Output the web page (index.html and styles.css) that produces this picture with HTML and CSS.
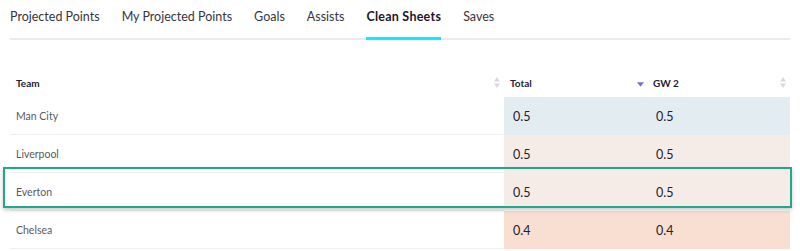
FILE: index.html
```html
<!DOCTYPE html>
<html lang="en">
<head>
<meta charset="utf-8">
<title>Clean Sheets</title>
<link rel="stylesheet" href="styles.css">
</head>
<body>
<nav class="tabs">
  <span class="tab">Projected Points</span>
  <span class="tab">My Projected Points</span>
  <span class="tab">Goals</span>
  <span class="tab">Assists</span>
  <span class="tab active">Clean Sheets</span>
  <span class="tab">Saves</span>
</nav>

<div class="table">
  <div class="row head">
    <div class="th">Team
      <svg class="sort" viewBox="0 0 6 11" width="6" height="11"><path d="M3 0 L6 4.5 H0 Z M3 11 L6 6.5 H0 Z"/></svg>
    </div>
    <div class="th">Total
      <svg class="sort active" viewBox="0 0 6 4" width="7" height="5"><path d="M0 0 H6 L3 4 Z"/></svg>
    </div>
    <div class="th">GW 2
      <svg class="sort" viewBox="0 0 6 11" width="6" height="11"><path d="M3 0 L6 4.5 H0 Z M3 11 L6 6.5 H0 Z"/></svg>
    </div>
  </div>

  <div class="row">
    <div class="td team">Man City</div>
    <div class="td num blue">0.5</div>
    <div class="td num blue">0.5</div>
  </div>
  <div class="row">
    <div class="td team">Liverpool</div>
    <div class="td num peach">0.5</div>
    <div class="td num peach">0.5</div>
  </div>
  <div class="row selected">
    <div class="td team">Everton</div>
    <div class="td num peach">0.5</div>
    <div class="td num peach">0.5</div>
  </div>
  <div class="row">
    <div class="td team">Chelsea</div>
    <div class="td num orange">0.4</div>
    <div class="td num orange">0.4</div>
  </div>
</div>
</body>
</html>
```

FILE: styles.css
```css
* { box-sizing: border-box; }

body {
  margin: 0;
  background: #fff;
  font-family: Lato, "Noto Sans", sans-serif;
  color: #2b2533;
}

.tabs {
  display: flex;
  gap: 22px;
  margin: 0 10px;
  box-shadow: inset 0 -2px 0 #ebebeb;
}

.tab {
  font-size: 12.5px;
  line-height: 16px;
  padding: 9px 0 12px;
  border-bottom: 3px solid transparent;
  color: #37343f;
  white-space: nowrap;
}

.tab.active {
  font-weight: 700;
  letter-spacing: 0.25px;
  color: #1c1628;
  border-bottom-color: #04f0fa;
}

.table {
  margin: 28px 10px 0;
}

.row {
  display: grid;
  grid-template-columns: 494px 143px 143px;
}

.head {
  height: 29px;
}

.th {
  display: flex;
  align-items: center;
  justify-content: space-between;
  padding: 0 4px 0 6px;
  font-size: 10px;
  font-weight: 700;
  color: #27202f;
}

.sort {
  fill: #dadada;
}

.sort.active {
  fill: #7a6fce;
  margin-top: 4px;
  margin-right: -1px;
}

.td {
  height: 38px;
  display: flex;
  align-items: center;
}

.team {
  padding-left: 6px;
  font-size: 10.5px;
  color: #5b5760;
  border-bottom: 1px solid #efefef;
}

.num {
  padding-left: 9px;
  font-size: 12.5px;
  color: #24202a;
}

.blue { background: #e3ecf1; }
.peach { background: #f6ece7; }
.orange { background: #f9dfd1; }

.selected {
  position: relative;
}

.selected .peach {
  background: linear-gradient(#f6ece7 calc(100% - 3px), #fff 0);
}

.selected::after {
  content: "";
  position: absolute;
  top: -6px;
  bottom: 3px;
  left: -7px;
  right: -2px;
  border: 2px solid #1fa88a;
  box-shadow: 0 2px 4px rgba(0, 0, 0, 0.22);
  pointer-events: none;
}
```
